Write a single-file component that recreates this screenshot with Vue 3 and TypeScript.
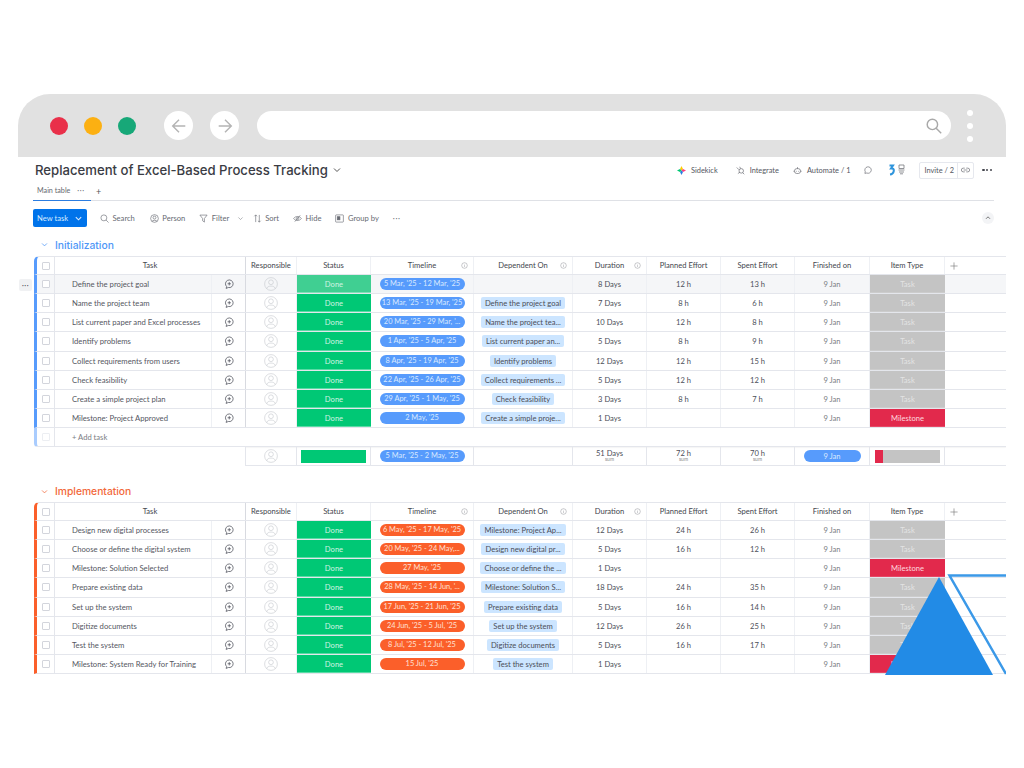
<template>
  <div class="page">
    <div class="window">
      <!-- browser chrome -->
      <div class="chrome">
        <div class="lights">
          <span class="light red"></span>
          <span class="light yellow"></span>
          <span class="light green"></span>
        </div>
        <button class="nav">
          <svg viewBox="0 0 20 20"><path d="M17 10H3M10 3l-7 7 7 7" /></svg>
        </button>
        <button class="nav">
          <svg viewBox="0 0 20 20"><path d="M3 10h14M10 3l7 7-7 7" /></svg>
        </button>
        <div class="address">
          <svg viewBox="0 0 20 20"><circle cx="8" cy="8" r="6.500" /><path d="M12.700 12.700L19 19" /></svg>
        </div>
        <div class="kebab"><i></i><i></i><i></i></div>
      </div>

      <div class="board">
        <div class="title-row">
          <h1>Replacement of Excel-Based Process Tracking</h1>
          <svg class="caret" viewBox="0 0 10 10"><path d="M2 3.500l3 3 3-3" /></svg>
          <div class="top-actions">
            <span class="act sidekick">
              <svg viewBox="0 0 12 12">
                <path d="M6 0l2 4-2 2-2-2z" fill="#ffcb00" />
                <path d="M12 6L8 8 6 6l2-2z" fill="#ff3d7f" />
                <path d="M6 12L4 8l2-2 2 2z" fill="#2a7de1" />
                <path d="M0 6l4-2 2 2-2 2z" fill="#00c875" />
              </svg>
              Sidekick
            </span>
            <span class="act integrate">
              <svg viewBox="0 0 12 12"><circle cx="7" cy="6.500" r="3" /><path d="M1 2l3 3M5 1l1 2.500M2.500 10L5 8.500M9 9l2 2" /></svg>
              Integrate
            </span>
            <span class="act automate">
              <svg viewBox="0 0 12 12"><rect x="2" y="3.500" width="8" height="6.500" rx="3" /><path d="M6 1.500v2M0.500 7h1.500M10 7h1.500M4.500 6.500v1M7.500 6.500v1" /></svg>
              Automate / 1
            </span>
            <svg class="bubble" viewBox="0 0 12 12"><path d="M2.500 10.500l.5-2.300A4.300 4.300 0 1 1 5 10z" /></svg>
            <span class="apps">
              <svg viewBox="0 0 18 12">
                <path d="M1.500 1.500h3.500L3 4.500h1.500c2 .5 2 5.500-2.500 6" class="apps-blue" />
                <path d="M11 1h5v3.500h-5zM10.500 6h6M11 8h5M12 9.800h3" class="apps-grey" />
              </svg>
            </span>
            <span class="invite">
              <span class="invite-label">Invite / 2</span>
              <svg viewBox="0 0 12 8"><path d="M5 1.500H3a2.500 2.500 0 0 0 0 5h2M7 1.500h2a2.500 2.500 0 0 1 0 5H7M3.500 4h5" /></svg>
            </span>
            <span class="more-dots"><i></i><i></i><i></i></span>
          </div>
        </div>

        <div class="tabs">
          <span class="tab">Main table <em>···</em></span>
          <span class="tab-add">+</span>
        </div>

        <div class="toolbar">
          <span class="new-task">
            New task
            <svg viewBox="0 0 10 10"><path d="M2 3.500l3 3 3-3" /></svg>
          </span>
          <span class="tool search">
            <svg viewBox="0 0 10 10"><circle cx="4.300" cy="4.300" r="3.300" /><path d="M6.800 6.800L9.500 9.500" /></svg>
            Search
          </span>
          <span class="tool person">
            <svg viewBox="0 0 10 10"><circle cx="5" cy="5" r="4.300" /><circle cx="5" cy="4" r="1.600" /><path d="M2.300 8c.7-1.300 4.700-1.300 5.400 0" /></svg>
            Person
          </span>
          <span class="tool filter">
            <svg viewBox="0 0 10 10"><path d="M1 1.200h8L6 5v4L4 7.500V5z" /></svg>
            Filter
            <svg class="filter-caret" viewBox="0 0 10 10"><path d="M2 3.500l3 3 3-3" /></svg>
          </span>
          <span class="tool sort">
            <svg viewBox="0 0 10 10"><path d="M3 9V1M1.500 2.500L3 1l1.500 1.500M7 1v8M5.500 7.500L7 9l1.500-1.500" /></svg>
            Sort
          </span>
          <span class="tool hide">
            <svg viewBox="0 0 10 10"><path d="M.7 5c2-3 6.600-3 8.600 0-2 3-6.600 3-8.600 0z" /><circle cx="5" cy="5" r="1.400" /><path d="M2 8.500L8 1.500" /></svg>
            Hide
          </span>
          <span class="tool group-by">
            <svg viewBox="0 0 10 10"><rect x=".7" y="1" width="8.600" height="8" rx=".6" /><rect x="2.500" y="3" width="3" height="3.500" class="solid" /></svg>
            Group by
          </span>
          <span class="tool-more">···</span>
          <span class="collapse">
            <svg viewBox="0 0 10 10"><path d="M2.500 6l2.500-2.500L7.500 6" /></svg>
          </span>
        </div>

        <section v-for="group in groups" :key="group.name" class="group" :class="group.theme">
          <div class="group-title">
            <svg viewBox="0 0 10 10"><path d="M1.500 3.500L5 7l3.500-3.500" /></svg>
            <h2>{{ group.name }}</h2>
          </div>

          <div class="table">
            <div class="row head">
              <span class="c check"><i class="box"></i></span>
              <span class="c task-head">Task</span>
              <span class="c resp">Responsible</span>
              <span class="c">Status</span>
              <span class="c">Timeline<svg class="info" viewBox="0 0 10 10"><circle cx="5" cy="5" r="4" /><path d="M5 4.500v2.500M5 2.800v.6" /></svg></span>
              <span class="c">Dependent On<svg class="info" viewBox="0 0 10 10"><circle cx="5" cy="5" r="4" /><path d="M5 4.500v2.500M5 2.800v.6" /></svg></span>
              <span class="c">Duration<svg class="info" viewBox="0 0 10 10"><circle cx="5" cy="5" r="4" /><path d="M5 4.500v2.500M5 2.800v.6" /></svg></span>
              <span class="c">Planned Effort</span>
              <span class="c">Spent Effort</span>
              <span class="c">Finished on</span>
              <span class="c type-head">Item Type</span>
              <span class="c plus">
                <svg viewBox="0 0 10 10"><path d="M5 .5v9M.5 5h9" /></svg>
              </span>
            </div>

            <div
              v-for="(item, i) in group.items"
              :key="item.name"
              class="row item"
              :class="{ hovered: group.theme === 'blue' && i === 0 }"
            >
              <span class="c check"><i class="box"></i></span>
              <span class="c name">{{ item.name }}</span>
              <span class="c chat">
                <svg viewBox="0 0 12 12"><path d="M3.200 9.100A4.600 4.600 0 1 1 5.200 10.200L2.500 11.300z" /><path d="M6.300 3.700v4M4.300 5.700h4" /></svg>
              </span>
              <span class="c resp">
                <svg class="avatar" viewBox="0 0 16 16"><circle cx="8" cy="8" r="7.300" /><circle cx="8" cy="6" r="2.700" /><path d="M3.200 13.200c.6-3.800 9-3.800 9.600 0" /></svg>
              </span>
              <span class="c status">Done</span>
              <span class="c"><span class="pill timeline">{{ item.timeline }}</span></span>
              <span class="c"><span v-if="item.dep" class="dep">{{ item.dep }}</span></span>
              <span class="c">{{ item.days }} Days</span>
              <span class="c">{{ item.planned ? item.planned + ' h' : '' }}</span>
              <span class="c">{{ item.spent ? item.spent + ' h' : '' }}</span>
              <span class="c finished">9 Jan</span>
              <span class="c kind" :class="{ milestone: !item.planned }">{{ item.planned ? 'Task' : 'Milestone' }}</span>
              <span class="c filler"></span>
            </div>

            <template v-if="group.summary">
              <div class="row add">
                <span class="c check"><i class="box faint"></i></span>
                <span class="add-label">+ Add task</span>
              </div>
              <div class="row summary">
                <span class="c sum-spacer"></span>
                <span class="c resp">
                  <svg class="avatar" viewBox="0 0 16 16"><circle cx="8" cy="8" r="7.300" /><circle cx="8" cy="6" r="2.700" /><path d="M3.200 13.200c.6-3.800 9-3.800 9.600 0" /></svg>
                </span>
                <span class="c"><span class="sum-status"></span></span>
                <span class="c"><span class="pill timeline">{{ group.summary.timeline }}</span></span>
                <span class="c"></span>
                <span class="c total">{{ group.summary.days }} Days<small>sum</small></span>
                <span class="c total">{{ group.summary.planned }} h<small>sum</small></span>
                <span class="c total">{{ group.summary.spent }} h<small>sum</small></span>
                <span class="c"><span class="pill date">9 Jan</span></span>
                <span class="c"><span class="sum-type"><i :style="{ width: group.summary.milestoneShare + '%' }"></i></span></span>
                <span class="c filler"></span>
              </div>
            </template>

            <span v-if="group.theme === 'blue'" class="row-menu">···</span>
          </div>
        </section>
      </div>

      <!-- logo over the corner of the table -->
      <svg class="mark" viewBox="0 0 122 101">
        <path class="mark-solid" d="M0 101L54 3l54 98z" />
        <path class="mark-line" d="M122 1.500H64.500L121 100" />
      </svg>
    </div>
  </div>
</template>

<script setup lang="ts">
interface Item {
  name: string
  timeline: string
  dep: string
  days: number
  planned: number
  spent: number
}

interface Summary {
  timeline: string
  days: number
  planned: number
  spent: number
  milestoneShare: number
}

interface Group {
  name: string
  theme: 'blue' | 'orange'
  items: Item[]
  summary?: Summary
}

const groups: Group[] = [
  {
    name: 'Initialization',
    theme: 'blue',
    items: [
      { name: 'Define the project goal', timeline: "5 Mar, '25 - 12 Mar, '25", dep: '', days: 8, planned: 12, spent: 13 },
      { name: 'Name the project team', timeline: "13 Mar, '25 - 19 Mar, '25", dep: 'Define the project goal', days: 7, planned: 8, spent: 6 },
      { name: 'List current paper and Excel processes', timeline: "20 Mar, '25 - 29 Mar, '...", dep: 'Name the project tea...', days: 10, planned: 12, spent: 8 },
      { name: 'Identify problems', timeline: "1 Apr, '25 - 5 Apr, '25", dep: 'List current paper an...', days: 5, planned: 8, spent: 9 },
      { name: 'Collect requirements from users', timeline: "8 Apr, '25 - 19 Apr, '25", dep: 'Identify problems', days: 12, planned: 12, spent: 15 },
      { name: 'Check feasibility', timeline: "22 Apr, '25 - 26 Apr, '25", dep: 'Collect requirements ...', days: 5, planned: 12, spent: 12 },
      { name: 'Create a simple project plan', timeline: "29 Apr, '25 - 1 May, '25", dep: 'Check feasibility', days: 3, planned: 8, spent: 7 },
      { name: 'Milestone: Project Approved', timeline: "2 May, '25", dep: 'Create a simple proje...', days: 1, planned: 0, spent: 0 }
    ],
    summary: { timeline: "5 Mar, '25 - 2 May, '25", days: 51, planned: 72, spent: 70, milestoneShare: 13 }
  },
  {
    name: 'Implementation',
    theme: 'orange',
    items: [
      { name: 'Design new digital processes', timeline: "6 May, '25 - 17 May, '25", dep: 'Milestone: Project Ap...', days: 12, planned: 24, spent: 26 },
      { name: 'Choose or define the digital system', timeline: "20 May, '25 - 24 May,...", dep: 'Design new digital pr...', days: 5, planned: 16, spent: 12 },
      { name: 'Milestone: Solution Selected', timeline: "27 May, '25", dep: 'Choose or define the ...', days: 1, planned: 0, spent: 0 },
      { name: 'Prepare existing data', timeline: "28 May, '25 - 14 Jun, '...", dep: 'Milestone: Solution S...', days: 18, planned: 24, spent: 35 },
      { name: 'Set up the system', timeline: "17 Jun, '25 - 21 Jun, '25", dep: 'Prepare existing data', days: 5, planned: 16, spent: 14 },
      { name: 'Digitize documents', timeline: "24 Jun, '25 - 5 Jul, '25", dep: 'Set up the system', days: 12, planned: 26, spent: 25 },
      { name: 'Test the system', timeline: "8 Jul, '25 - 12 Jul, '25", dep: 'Digitize documents', days: 5, planned: 16, spent: 17 },
      { name: 'Milestone: System Ready for Training', timeline: "15 Jul, '25", dep: 'Test the system', days: 1, planned: 0, spent: 0 }
    ]
  }
]
</script>

<style>
html,
body {
  margin: 0;
  background: #fff;
}
</style>

<style scoped>
* {
  box-sizing: border-box;
}

svg {
  display: block;
  fill: none;
  stroke: currentColor;
}

.page {
  width: 1024px;
  height: 768px;
  padding: 94px 18px 0;
  background: #fff;
  overflow: hidden;
  font-family: 'Lato', 'Noto Sans', sans-serif;
  color: #4b4e58;
}

.window {
  position: relative;
  width: 988px;
  height: 581px;
  overflow: hidden;
}

/* browser chrome */
.chrome {
  display: flex;
  align-items: center;
  height: 63px;
  padding: 0 29px 0 32px;
  background: #e1e1e1;
  border-radius: 32px 32px 0 0;
}
.lights {
  display: flex;
  gap: 16px;
  margin-right: 28px;
}
.light {
  width: 18px;
  height: 18px;
  border-radius: 50%;
}
.red { background: #e9304a; }
.yellow { background: #fcb012; }
.green { background: #17a878; }

.nav {
  display: flex;
  align-items: center;
  justify-content: center;
  width: 29px;
  height: 29px;
  margin-right: 17px;
  padding: 0;
  border: 0;
  border-radius: 50%;
  background: #fff;
  color: #b4b4b4;
}
.nav svg {
  width: 18px;
  height: 18px;
  stroke-width: 1.6;
}
.nav + .nav {
  margin-right: 18px;
}
.address {
  display: flex;
  align-items: center;
  justify-content: flex-end;
  width: 694px;
  height: 29px;
  padding-right: 9px;
  border-radius: 15px;
  background: #fff;
  color: #a9a9a9;
}
.address svg {
  width: 16px;
  height: 16px;
  stroke-width: 1.800;
}
.kebab {
  display: flex;
  flex-direction: column;
  gap: 7px;
  margin-left: 16px;
}
.kebab i {
  width: 6px;
  height: 6px;
  border-radius: 50%;
  background: #fff;
}

/* board header */
.board {
  padding-left: 15px;
}
.title-row {
  display: flex;
  align-items: center;
  height: 26px;
  padding-left: 2px;
}
h1 {
  margin: 0;
  font-family: 'Inter', 'Noto Sans', sans-serif;
  font-size: 13.150px;
  font-weight: 500;
  white-space: nowrap;
  color: #3a3c44;
}
.caret {
  width: 10px;
  height: 10px;
  margin-left: 4px;
  color: #555;
}
.top-actions {
  display: flex;
  align-items: center;
  margin-left: auto;
  font-size: 7.400px;
  color: #55575f;
}
.act {
  display: flex;
  align-items: center;
  gap: 5px;
  white-space: nowrap;
}
.act svg {
  width: 9px;
  height: 9px;
  stroke-width: .8;
}
.sidekick svg { stroke: none; }
.sidekick { margin-right: 18px; }
.integrate { margin-right: 14px; }
.automate { margin-right: 13px; }
.bubble {
  width: 9px;
  height: 10px;
  margin-right: 16px;
  stroke-width: .8;
  color: #55575f;
}
.apps svg {
  width: 18px;
  height: 12px;
  margin-right: 13px;
}
.apps-blue {
  stroke: #2f95dc;
  stroke-width: 2;
}
.apps-grey {
  stroke: #77797f;
  stroke-width: .8;
}
.invite {
  display: flex;
  align-items: center;
  width: 55px;
  height: 17px;
  margin-right: 8px;
  border: 1px solid #e6e8ee;
  border-radius: 2px;
}
.invite-label {
  width: 38px;
  padding-left: 4px;
  line-height: 15px;
  white-space: nowrap;
  border-right: 1px solid #e6e8ee;
}
.invite svg {
  width: 9px;
  height: 6px;
  margin: 0 3px;
  stroke-width: .8;
}
.more-dots {
  display: flex;
  gap: 1.500px;
  padding-right: 14px;
}
.more-dots i {
  width: 2.200px;
  height: 2.200px;
  border-radius: 50%;
  background: #44464e;
}

/* tabs */
.tabs {
  display: flex;
  align-items: center;
  height: 18px;
  margin-right: 12px;
  border-bottom: 1px solid #dfe1e6;
  font-size: 7.200px;
  color: #676a72;
}
.tab {
  width: 58px;
  height: 18px;
  padding-left: 4px;
  line-height: 16px;
  white-space: nowrap;
  border-bottom: 1px solid #2b7de1;
}
.tab em {
  margin-left: 5px;
  font-style: normal;
  letter-spacing: .6px;
}
.tab-add {
  margin-left: 5px;
  font-size: 9px;
  color: #555;
}

/* toolbar */
.toolbar {
  display: flex;
  align-items: center;
  height: 18px;
  margin: 8px 12px 0 0;
  font-size: 7.600px;
  color: #676a72;
}
.new-task {
  display: flex;
  align-items: center;
  justify-content: space-between;
  width: 54px;
  height: 18px;
  padding: 0 4px;
  border-radius: 2px;
  background: #0073ea;
  color: #d8ebff;
  white-space: nowrap;
}
.new-task svg {
  width: 9px;
  height: 9px;
  stroke-width: 1.200;
}
.tool {
  display: flex;
  align-items: center;
  gap: 3.500px;
  white-space: nowrap;
}
.tool svg {
  width: 9px;
  height: 9px;
  stroke-width: .7;
}
.search { margin-left: 13px; }
.person { margin-left: 15px; }
.filter { margin-left: 14px; }
.sort { margin-left: 9px; }
.hide { margin-left: 14px; }
.group-by { margin-left: 14px; }
.tool .filter-caret {
  margin-left: 4px;
  width: 7px;
  height: 7px;
}
.solid { fill: currentColor; }
.tool-more {
  margin-left: 14px;
  letter-spacing: .6px;
}
.collapse {
  display: flex;
  align-items: center;
  justify-content: center;
  width: 12px;
  height: 12px;
  margin-left: auto;
  border-radius: 50%;
  background: #f3f4f6;
  color: #555;
}
.collapse svg {
  width: 8px;
  height: 8px;
}

/* groups */
.group-title {
  display: flex;
  align-items: center;
  gap: 6px;
  height: 29px;
  padding: 6px 0 0 8px;
}
.group-title svg {
  width: 7px;
  height: 7px;
  stroke-width: 1.100;
}
h2 {
  margin: 0 0 0 1px;
  font-family: 'Inter', 'Noto Sans', sans-serif;
  font-size: 10.300px;
  font-weight: 500;
}
.blue .group-title { color: #4f97f7; }
.orange .group-title { color: #f2683a; }
.blue { --accent: #579bfc; --soft: #a9ccfe; }
.orange { --accent: #fb5f2a; --soft: #fb5f2a; margin-top: 14px; }
.orange .group-title {
  height: 22px;
  padding-top: 0;
}

.table {
  position: relative;
  margin-left: 1px;
}

.row {
  display: grid;
  grid-template-columns: 18px 157px 34px 51px 74px 103px 99px 74px 74px 74px 75px 75px 61px;
  align-items: stretch;
  border-bottom: 1px solid #e4e6ec;
  font-size: 7.600px;
  white-space: nowrap;
}
.head {
  height: 19px;
  padding-bottom: 0;
  border-top: 1px solid #e4e6ec;
  border-left: 3px solid var(--accent);
  border-top-left-radius: 5px;
  line-height: 15px;
  color: #44464e;
}
.item {
  height: 19.125px;
  border-left: 3px solid var(--accent);
}
.head .task-head {
  grid-column: span 2;
}
.c {
  position: relative;
  display: flex;
  align-items: center;
  justify-content: center;
  min-width: 0;
  border-right: 1px solid #eef0f4;
}
.check {
  border-right: 1px solid #e4e6ec;
}
.box {
  display: block;
  width: 8px;
  height: 8px;
  border: 1px solid #d3d5dc;
  border-radius: 1px;
  background: #fff;
}
.box.faint { border-color: #eceef2; }
.task-head,
.chat {
  border-right: 1px solid #d8dae0;
}
.name {
  justify-content: flex-start;
  padding-left: 17px;
  font-size: 7.700px;
  color: #55575f;
}
.chat {
  color: #4b4e58;
}
.chat svg {
  width: 10px;
  height: 10px;
  stroke-width: .9;
}
.avatar {
  width: 14px;
  height: 14px;
  stroke-width: .6;
  color: #bcbfc6;
}
.info {
  position: absolute;
  right: 5px;
  top: 50%;
  width: 7px;
  height: 7px;
  margin-top: -3.500px;
  stroke-width: .7;
  color: #8d9097;
}
.plus {
  justify-content: flex-start;
  padding-left: 5px;
  border-right: 0;
  color: #777;
}
.plus svg {
  width: 8px;
  height: 8px;
  stroke-width: .8;
}
.status {
  background: #00c875;
  color: #cff3e2;
  border-right: 0;
  box-shadow: inset 0 -1px 0 rgba(255, 255, 255, .35);
}
.pill {
  display: block;
  width: 85px;
  height: 12px;
  line-height: 12px;
  text-align: center;
  border-radius: 6px;
}
.timeline {
  background: var(--accent);
  font-size: 7.400px;
  color: #d9e9ff;
}
.orange .timeline {
  color: #ffe0d3;
}
.dep {
  display: block;
  height: 12px;
  padding: 0 4px;
  line-height: 12px;
  border-radius: 2px;
  background: #cce5ff;
  color: #4b4e58;
}
.finished {
  color: #7b7d84;
}
.kind {
  background: #c4c4c4;
  color: #e3e3e3;
  border-right: 0;
  box-shadow: inset 0 -1px 0 rgba(255, 255, 255, .15);
}
.kind.milestone {
  background: #e2294c;
  color: #ffd7de;
}
.filler {
  border-right: 0;
}

/* first row is hovered in the reference */
.hovered {
  background: #f5f6f8;
}
.hovered .status {
  background: #40cf92;
}
.row-menu {
  position: absolute;
  top: 23px;
  left: -15px;
  width: 13px;
  height: 12px;
  line-height: 12px;
  text-align: center;
  letter-spacing: .5px;
  border-radius: 2px;
  background: #f0f1f3;
  font-size: 7px;
  color: #44464e;
}

.add {
  display: flex;
  align-items: stretch;
  height: 19px;
  border-left: 3px solid var(--soft);
  border-bottom-left-radius: 4px;
  box-shadow: 0 1px 1px rgba(0, 0, 0, .04);
}
.add .check {
  width: 18px;
}
.add-label {
  align-self: center;
  padding-left: 17px;
  color: #7b7d84;
}

.summary {
  height: 19px;
  grid-template-columns: 212px 51px 74px 103px 99px 74px 74px 74px 75px 75px 61px;
}
.sum-spacer {
  margin-bottom: -1px;
  background: #fff;
  border-right: 1px solid #e4e6ec;
}
.summary .c {
  border-right-color: #e4e6ec;
}
.sum-status {
  display: block;
  width: 65px;
  height: 13px;
  background: #00c875;
}
.total {
  flex-direction: column;
  line-height: 7px;
  color: #4b4e58;
}
.total small {
  font-size: 5px;
  line-height: 5px;
  color: #888;
}
.date {
  width: 57px;
  background: #579bfc;
  color: #d9e9ff;
}
.sum-type {
  display: block;
  width: 65px;
  height: 13px;
  background: #c4c4c4;
}
.sum-type i {
  display: block;
  height: 100%;
  background: #e2294c;
}

/* logo */
.mark {
  position: absolute;
  left: 867px;
  top: 480px;
  width: 122px;
  height: 101px;
  overflow: hidden;
}
.mark-solid {
  fill: #228be6;
  stroke: none;
}
.mark-line {
  fill: none;
  stroke: #3b99e8;
  stroke-width: 2.500;
}
</style>
